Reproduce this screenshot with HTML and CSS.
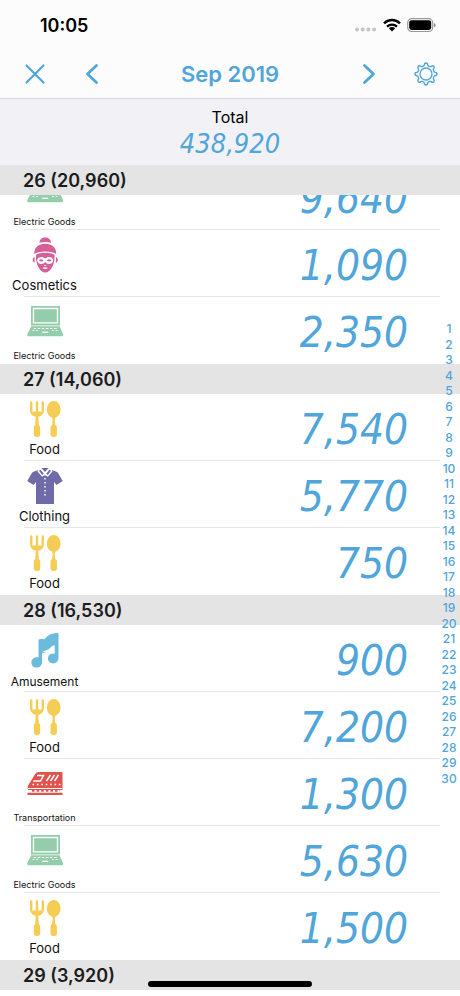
FILE: index.html
```html
<!DOCTYPE html>
<html lang="en">
<head>
<meta charset="utf-8">
<meta name="viewport" content="width=device-width, initial-scale=1">
<title>Sep 2019</title>
<link rel="stylesheet" href="styles.css">
</head>
<body>
<svg class="sprite" aria-hidden="true">
  <symbol id="laptop" viewBox="0 0 36 36">
    <path fill="none" stroke="currentColor" stroke-width="1.8" d="M4.900 2.900h27.200v17.600H4.900z"/>
    <path fill="currentColor" d="M7.200 5.200h22.600v13H7.200zM4.300 22.200h28.200L36 30v1.200a1 1 0 0 1-1 1H1.300a1 1 0 0 1-1-1V30z"/>
    <path stroke="#fff" stroke-width="1.200" stroke-dasharray="2.600 1.500" d="M6.500 24.500h24"/>
    <path stroke="#fff" stroke-width=".8" stroke-dasharray="2 1.600" d="M5.500 26.500h6M25 26.500h6"/>
    <path fill="#fff" d="M15.200 27.600h6V29h-6z"/>
  </symbol>
  <symbol id="woman" viewBox="0 0 36 36">
    <g fill="currentColor">
      <path d="M12.500 5.800C12.500 2.500 15 .5 18.200.5s5.800 2 5.800 5.300c-3.500-1-8-1-11.500 0z"/>
      <path d="M7.200 17C7.200 10.300 11.500 6.700 18.200 6.700S29.300 10.300 29.300 17c-6-3.200-16-3.200-22.100 0z"/>
      <path d="M9 17.800c5.500-2.600 13-2.600 18.500 0 .6 8-3.300 17.700-9.300 17.700S8.400 25.800 9 17.800z"/>
      <path d="M7.600 20v5.500c-2.500-.5-2.700-4.600 0-5.500zM28.900 20v5.500c2.500-.5 2.700-4.600 0-5.500z"/>
    </g>
    <path fill="#fff" d="M10.300 22.400c1.500-3.200 6.200-3 7.900-.8 1.700-2.200 6.400-2.400 7.900.8.400 5-5.600 6-7.900 2.600-2.300 3.400-8.300 2.400-7.900-2.600z"/>
    <path fill="currentColor" d="M11.800 23.500q2.400-2.400 4.800 0-2.400 1.800-4.800 0zM19.800 23.500q2.400-2.400 4.800 0-2.400 1.800-4.800 0z"/>
    <path fill="#fff" d="M15.500 31q2.700-1.600 5.400 0-2.700 2-5.400 0zM17 28h2.400v.7H17z"/>
  </symbol>
  <symbol id="food" viewBox="0 0 36 36">
    <path fill="none" stroke="currentColor" stroke-width="2.400" stroke-linecap="round" d="M4.200 1.500v7.800c0 7 11.600 7 11.600 0V1.500M10 1.500V27"/>
    <g fill="currentColor">
      <path d="M6 10.500h8v3.200q-4 2.600-8 0zM9 14h2l.8 11H8.200z"/>
      <rect x="6.800" y="24" width="6.400" height="12" rx="2.700"/>
      <ellipse cx="26.700" cy="8.500" rx="6.900" ry="8.500"/>
      <path d="M24.800 15h3.800l-.9 4 .9 7h-3.800l.9-7z"/>
      <rect x="23.500" y="24" width="6.400" height="12" rx="2.700"/>
    </g>
  </symbol>
  <symbol id="shirt" viewBox="0 0 36 36">
    <path fill="currentColor" d="M11.500 2 18 7.800 24.500 2 29 3.600q2 .7 3 3L35.700 13l-6.200 4-2.500-3v22H9V14l-2.500 3-6.200-4L4 6.600q1-2.300 3-3z"/>
    <path fill="#fff" d="M11.500 1.500 14 .5l4 4.700 4-4.700 2.500 1 1 2-4.700 5.300L18 6.900l-2.800 1.900-4.700-5.300z"/>
    <path fill="currentColor" d="M14.400 0h7.200L18 3.900zM12 2.800l1.500-1 3.200 3.800-1.500 1.400zM24 2.800l-1.500-1-3.200 3.800 1.500 1.400z"/>
    <path fill="none" stroke="#fff" stroke-width="1.500" stroke-dasharray="1.500 2.500" d="M18 10v20"/>
  </symbol>
  <symbol id="music" viewBox="0 0 36 36">
    <path fill="currentColor" d="M11.500 7.500q3.500-1.200 6 0C20.500 3 25.500 1 30.200 1q1.300 0 1.300 1.300V26c0 3.200-2.500 5.400-5.300 5.400-3 0-5.200-2-5.200-4.900 0-3.500 3-5.600 6.500-4.900v-8.200c-2.500 4-6.500 6.500-12.500 7v9.500c0 3.500-2.300 5.700-5.400 5.700s-5.200-2.200-5.200-5.200c0-3.500 3.200-5.800 7.100-5z"/>
    <path fill="currentColor" d="M13 7.500h5C22 3 26 2 31 2v11c-6 2-8 7-16 8.500z"/>
    <path fill="#fff" d="M15 20.500c2.500-2.500 5.500-1.500 8-4.500 1.600-1.600 2.800-2.600 4.500-3v8.500c-2-.5-4-.1-5.300 1.200-1-2-3.200-2.700-7.200-2.200z"/>
  </symbol>
  <symbol id="train" viewBox="0 0 36 36">
    <path fill="currentColor" d="M11.500 6h24v18H1.200q-1.500-3 1-6.300L8 8.200Q9.300 6 11.500 6z"/>
    <g fill="none" stroke="#fff" stroke-width="1.500">
      <path d="M10 9.500h6.500l-3 5.500H6.300M23.500 9l-4 6M27.500 9l-4 6M31.500 9l-4 6"/>
      <path stroke-dasharray="1.600 2.800" d="M5.500 18.500h30"/>
      <path stroke-width="1" d="M1 22.500h34"/>
      <path stroke-width="2.800" d="M.5 25.300h35"/>
    </g>
    <path fill="currentColor" d="M.5 26.800h35V29H.5z"/>
    <path stroke="currentColor" stroke-width="2.400" stroke-dasharray="2.600 2" d="M5 24.600h28"/>
  </symbol>
</svg>

<div class="app">
  <header class="top">
    <div class="status">
      <span class="clock">10:05</span>
      <div class="signals">
        <svg width="22" height="16" viewBox="0 0 22 16" fill="#c4c4c4" aria-hidden="true"><circle cx="2" cy="12.500" r="2"/><circle cx="7.700" cy="12.500" r="2"/><circle cx="13.400" cy="12.500" r="2"/><circle cx="19.100" cy="12.500" r="2"/></svg>
        <svg width="18" height="16" viewBox="0 0 18 16" fill="none" stroke="#000" stroke-width="2.400" aria-hidden="true"><path d="M1 6.300a11.500 11.500 0 0 1 16 0M4 9.600a7.200 7.200 0 0 1 10 0"/><path fill="#000" stroke="none" d="m9 14.500-3.200-3.200q3.200-2.600 6.400 0z"/></svg>
        <svg width="29" height="16" viewBox="0 0 29 16" aria-hidden="true"><rect x=".7" y="1.700" width="25" height="12.800" rx="4" fill="none" stroke="#999" stroke-width="1.200"/><rect x="2.200" y="3.200" width="22" height="9.800" rx="2.400"/><path d="M27 6v4.300q1.600-.6 1.600-2.100T27 6z" fill="#888"/></svg>
      </div>
    </div>
    <div class="nav">
      <button type="button" aria-label="Close"><svg width="24" height="24" viewBox="0 0 24 24"><path d="m3.500 3.500 17 17M20.500 3.500l-17 17" stroke-width="2.200"/></svg></button>
      <button type="button" aria-label="Previous month"><svg width="24" height="24" viewBox="0 0 24 24"><path d="m16.500 3.500-9 8.500 9 8.500" stroke-width="2.800"/></svg></button>
      <h1>Sep 2019</h1>
      <button type="button" aria-label="Next month"><svg width="24" height="24" viewBox="0 0 24 24"><path d="m7.500 3.500 9 8.500-9 8.500" stroke-width="2.800"/></svg></button>
      <button type="button" aria-label="Settings"><svg width="24" height="24" viewBox="0 0 24 24"><circle cx="12" cy="12" r="6" stroke-width="1.300"/><path stroke-width="1.400" d="M10.200 3.500Q10.400 1 12 1t1.800 2.500q.2.600 1.700 1.100 1.200.2 1.700-.2 1.600-1.300 2.600-.2t-.2 2.600q-.5.600-.1 1.700.4 1.500 1.100 1.700Q23 10.400 23 12t-2.400 1.800q-.7.200-1.100 1.700-.4 1.100.1 1.700 1.200 1.500.2 2.600t-2.600-.2q-.5-.4-1.700-.1-1.500.4-1.700 1.100Q13.600 23 12 23t-1.800-2.400q-.2-.7-1.700-1.100-1.200-.3-1.700.1-1.600 1.300-2.600.2t.2-2.600q.5-.6.100-1.700-.4-1.500-1.100-1.700Q1 13.600 1 12t2.400-1.800q.7-.2 1.100-1.700.4-1.100-.1-1.700-1.200-1.500-.2-2.600t2.600.2q.5.400 1.700.200 1.500-.5 1.700-1.100z"/></svg></button>
    </div>
  </header>

  <section class="total">
    <h2>Total</h2>
    <output>438,920</output>
  </section>

  <main class="ledger">
    <section>
      <h2 class="day">26 (20,960)</h2>
      <ul class="entries scrolled">
        <li><div class="category green"><svg><use href="#laptop"/></svg><span class="small">Electric Goods</span></div><span class="amount">9,640</span></li>
        <li><div class="category pink"><svg><use href="#woman"/></svg><span>Cosmetics</span></div><span class="amount">1,090</span></li>
        <li><div class="category green"><svg><use href="#laptop"/></svg><span class="small">Electric Goods</span></div><span class="amount">2,350</span></li>
      </ul>
    </section>
    <section>
      <h2 class="day">27 (14,060)</h2>
      <ul class="entries">
        <li><div class="category yellow"><svg><use href="#food"/></svg><span>Food</span></div><span class="amount">7,540</span></li>
        <li><div class="category purple"><svg><use href="#shirt"/></svg><span>Clothing</span></div><span class="amount">5,770</span></li>
        <li><div class="category yellow"><svg><use href="#food"/></svg><span>Food</span></div><span class="amount">750</span></li>
      </ul>
    </section>
    <section>
      <h2 class="day">28 (16,530)</h2>
      <ul class="entries">
        <li><div class="category blue"><svg><use href="#music"/></svg><span class="medium">Amusement</span></div><span class="amount">900</span></li>
        <li><div class="category yellow"><svg><use href="#food"/></svg><span>Food</span></div><span class="amount">7,200</span></li>
        <li><div class="category red"><svg><use href="#train"/></svg><span class="small clipped">Transportation</span></div><span class="amount">1,300</span></li>
        <li><div class="category green"><svg><use href="#laptop"/></svg><span class="small">Electric Goods</span></div><span class="amount">5,630</span></li>
        <li><div class="category yellow"><svg><use href="#food"/></svg><span>Food</span></div><span class="amount">1,500</span></li>
      </ul>
    </section>
    <section>
      <h2 class="day">29 (3,920)</h2>
    </section>
    <nav class="index" aria-label="Days">
      <a href="#">1</a><a href="#">2</a><a href="#">3</a><a href="#">4</a><a href="#">5</a><a href="#">6</a><a href="#">7</a><a href="#">8</a><a href="#">9</a><a href="#">10</a><a href="#">11</a><a href="#">12</a><a href="#">13</a><a href="#">14</a><a href="#">15</a><a href="#">16</a><a href="#">17</a><a href="#">18</a><a href="#">19</a><a href="#">20</a><a href="#">21</a><a href="#">22</a><a href="#">23</a><a href="#">24</a><a href="#">25</a><a href="#">26</a><a href="#">27</a><a href="#">28</a><a href="#">29</a><a href="#">30</a>
    </nav>
  </main>
  <div class="home-indicator"></div>
</div>
</body>
</html>
```
FILE: styles.css
```css
* { box-sizing: border-box; }

body, h1, h2, ul { margin: 0; padding: 0; }

body {
  background: #fff;
  color: #000;
  font-family: Inter, "Liberation Sans", sans-serif;
}

.sprite { position: absolute; width: 0; height: 0; }

.app {
  position: relative;
  display: flex;
  flex-direction: column;
  min-height: 100vh;
  overflow: hidden;
}

.top {
  background: #fcfcfd;
  border-bottom: 1px solid #d8d8dc;
}

.status {
  display: flex;
  justify-content: space-between;
  align-items: center;
  height: 50px;
  padding: 0 24px 0 40px;
}

.clock {
  padding-top: 2px;
  font-size: 18px;
  font-weight: 600;
  line-height: 24px;
}

.signals { display: flex; gap: 6px; }

.nav {
  display: flex;
  align-items: center;
  height: 48px;
  padding: 0 18px;
}

.nav button {
  display: flex;
  justify-content: center;
  width: 33px;
  padding: 0;
  border: 0;
  background: none;
}

.nav button:nth-of-type(2) { margin-left: 24px; }
.nav button:nth-of-type(3) { margin-right: 24px; }

.nav svg {
  fill: none;
  stroke: #50a5da;
  stroke-linecap: round;
  stroke-linejoin: round;
}

.nav h1 {
  flex: 1;
  color: #50a5da;
  font-size: 22px;
  font-weight: 600;
  line-height: 28px;
  text-align: center;
}

.total {
  display: flex;
  flex-direction: column;
  align-items: center;
  padding: 8px 0 4px;
  background: #f1f1f6;
}

.total h2 { font-size: 16px; font-weight: 400; line-height: 20px; }

.total output, .amount {
  color: #50a5da;
  font-family: "DejaVu Sans Condensed", "Open Sans", sans-serif;
  font-style: italic;
}

.total output { font-size: 27px; line-height: 34px; }

.ledger { position: relative; }

.day {
  position: relative;
  z-index: 1;
  padding: 2px 23px 0;
  background: #e4e4e4;
  color: #1c1c1e;
  font-size: 18px;
  font-weight: 600;
  line-height: 28px;
}

.entries { list-style: none; }

.entries.scrolled { margin-top: -32px; }

.entries li {
  position: relative;
  display: flex;
  justify-content: space-between;
  height: 67px;
  padding: 0 52px 0 12px;
}

.entries li:not(:last-child)::after {
  content: "";
  position: absolute;
  right: 20px;
  bottom: 0;
  left: 24px;
  height: 1px;
  background: #e6e6e8;
}

.category {
  display: flex;
  flex-direction: column;
  align-items: center;
  justify-content: space-between;
  width: 65px;
  padding: 7px 0 3px;
}

.category svg { flex: none; width: 36px; height: 36px; }

.category span {
  color: #111;
  font-size: 13px;
  line-height: 18px;
  white-space: nowrap;
}

.category .medium { font-size: 12px; line-height: 14px; }
.category .small { font-size: 9px; line-height: 11px; }
.category .clipped { height: 10px; margin-bottom: 1px; overflow: hidden; }

.green { color: #93cdab; }
.pink { color: #d75f99; }
.yellow { color: #f5cd55; }
.purple { color: #6f6ba8; }
.blue { color: #6bbbdc; }
.red { color: #e0534d; }

.amount { padding-top: 2px; font-size: 42px; line-height: 67px; }

.index {
  position: absolute;
  z-index: 2;
  top: 156px;
  right: 0;
  display: grid;
  grid-auto-rows: 1fr;
  align-items: center;
  width: 22px;
  height: 465px;
}

.index a {
  color: #50a5da;
  font-size: 12px;
  font-weight: 500;
  line-height: 15px;
  text-align: center;
  text-decoration: none;
}

.home-indicator {
  position: absolute;
  z-index: 3;
  bottom: 9px;
  left: 50%;
  width: 164px;
  height: 6px;
  margin-left: -82px;
  border-radius: 3px;
  background: #000;
}
```
